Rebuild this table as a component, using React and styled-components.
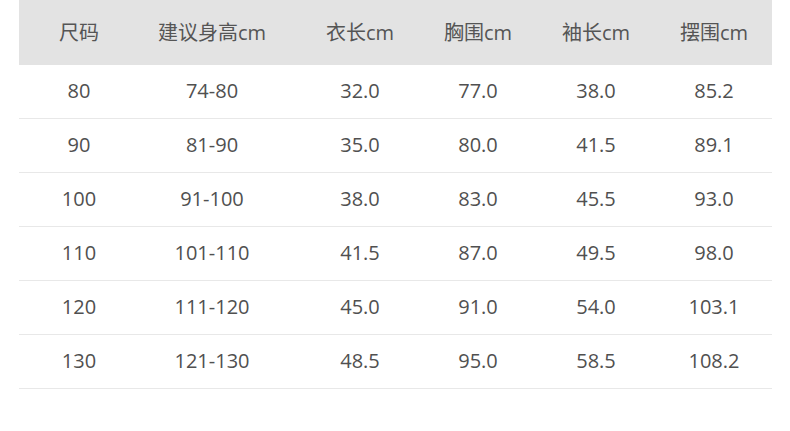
import React from "react";
import styled, { createGlobalStyle } from "styled-components";

const Global = createGlobalStyle`
  html, body { margin: 0; padding: 0; background: #ffffff; }
  body { font-family: "Open Sans", "Noto Sans CJK SC", sans-serif; }
`;

const Page = styled.div`
  width: 790px;
  height: 431px;
  padding: 0 18px 0 19px;
  box-sizing: border-box;
  background: #fff;
`;

const Table = styled.div`
  width: 753px;
  display: flex;
  flex-direction: column;
`;

const Row = styled.div`
  display: grid;
  grid-template-columns: 120px 162px repeat(4, 118px);
  align-items: center;
  height: ${(p) => (p.$head ? "65px" : "54px")};
  background: ${(p) => (p.$head ? "#e3e3e3" : "transparent")};
  border-bottom: ${(p) => (p.$head ? "none" : "1px solid #e8e8e8")};
  box-sizing: border-box;
  padding-bottom: ${(p) => (p.$head ? "0" : "1px")};
`;

const Cell = styled.div`
  text-align: center;
  font-family: "Open Sans", "Noto Sans CJK SC", sans-serif;
  font-size: 20px;
  color: ${(p) => (p.$head ? "#555555" : "#505050")};
  padding-right: ${(p) => (p.$wide ? "16px" : "0")};
  line-height: 1;
  white-space: nowrap;
`;

const headers = ["尺码", "建议身高cm", "衣长cm", "胸围cm", "袖长cm", "摆围cm"];
const rows = [
  ["80", "74-80", "32.0", "77.0", "38.0", "85.2"],
  ["90", "81-90", "35.0", "80.0", "41.5", "89.1"],
  ["100", "91-100", "38.0", "83.0", "45.5", "93.0"],
  ["110", "101-110", "41.5", "87.0", "49.5", "98.0"],
  ["120", "111-120", "45.0", "91.0", "54.0", "103.1"],
  ["130", "121-130", "48.5", "95.0", "58.5", "108.2"],
];

export default function App() {
  return (
    <>
      <Global />
      <Page>
        <Table>
          <Row $head>
            {headers.map((h, i) => (
              <Cell key={h} $head $wide={i === 1}>
                {h}
              </Cell>
            ))}
          </Row>
          {rows.map((r) => (
            <Row key={r[0]}>
              {r.map((v, i) => (
                <Cell key={i} $wide={i === 1}>
                  {v}
                </Cell>
              ))}
            </Row>
          ))}
        </Table>
      </Page>
    </>
  );
}
